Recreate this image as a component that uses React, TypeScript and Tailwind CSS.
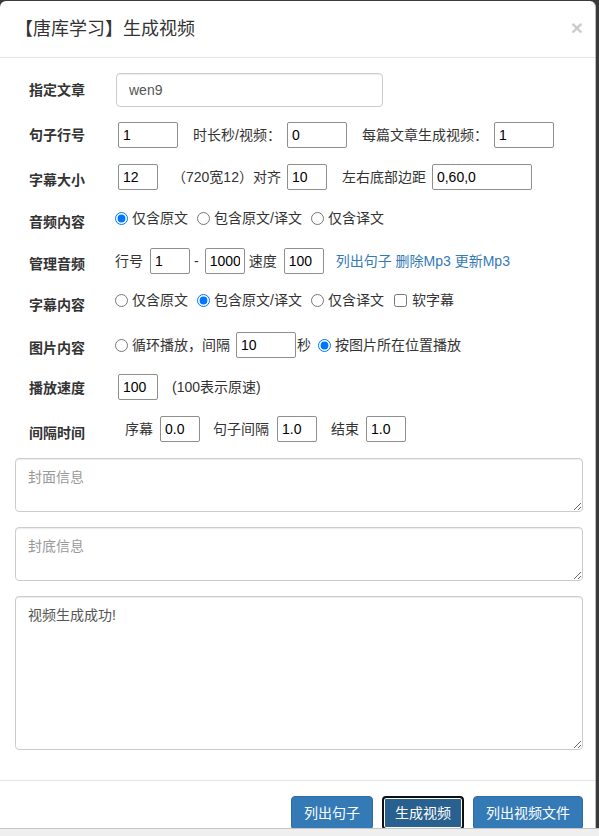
import React from "react";

const smallInput =
  "h-[26px] shrink-0 rounded-[2px] border border-[#8f8f8f] bg-white px-[4px] text-[14px] text-black outline-none";

const Label = ({ text, shift = "" }: { text: string; shift?: string }) => (
  <div className={`w-[101px] shrink-0 pl-[14px] text-[14px] font-bold text-[#333] ${shift}`}>{text}</div>
);

const Radio = ({ checked = false, className = "" }: { checked?: boolean; className?: string }) => (
  <input type="radio" defaultChecked={checked} className={`m-0 h-[13px] w-[13px] shrink-0 ${className}`} />
);

const TextArea = ({ placeholder, value, className }: { placeholder?: string; value?: string; className: string }) => (
  <textarea
    placeholder={placeholder}
    defaultValue={value}
    className={`block w-full rounded-[4px] border border-[#ccc] px-[12px] py-[8px] text-[14px] leading-[20px] text-[#555] shadow-[inset_0_1px_1px_rgba(0,0,0,0.075)] outline-none placeholder:text-[#999] ${className}`}
  />
);

export default function App() {
  return (
    <div className="flex h-[836px] w-[599px] flex-col overflow-hidden bg-[#3a3a3a] font-['Liberation_Sans','Noto_Sans_CJK_SC',sans-serif] text-[14px] text-[#333]">
      <div className="flex h-[828px] shrink-0 pt-px">
        <div className="flex w-[596px] flex-col overflow-hidden rounded-t-[6px] border-r border-[#bdbdbd] bg-white">
          {/* header */}
          <div className="flex h-[57px] shrink-0 items-center border-b border-[#e5e5e5] pl-[15px] pr-[12px]">
            <h4 className="text-[18px] leading-[26px] text-[#333]">【唐库学习】生成视频</h4>
            <span className="ml-auto mt-[-4px] text-[21px] font-bold leading-none text-black opacity-20">×</span>
          </div>

          {/* body */}
          <div className="shrink-0 pb-[30px] pl-[15px] pr-[12px] pt-[15px]">
            <div className="flex h-[34px] items-center">
              <Label text="指定文章" />
              <input
                defaultValue="wen9"
                className="h-[34px] w-[267px] rounded-[4px] border border-[#ccc] px-[12px] text-[14px] text-[#555] shadow-[inset_0_1px_1px_rgba(0,0,0,0.075)] outline-none"
              />
            </div>

            <div className="mt-[15px] flex h-[26px] items-center whitespace-nowrap">
              <Label text="句子行号" />
              <input defaultValue="1" className={`${smallInput} ml-[2px] w-[60px]`} />
              <span className="ml-[15px]">时长秒/视频：</span>
              <input defaultValue="0" className={`${smallInput} ml-[6px] w-[60px]`} />
              <span className="ml-[15px]">每篇文章生成视频：</span>
              <input defaultValue="1" className={`${smallInput} ml-[6px] w-[60px]`} />
            </div>

            <div className="mt-[16px] flex h-[26px] items-center whitespace-nowrap">
              <Label text="字幕大小" shift="mt-[6px]" />
              <input defaultValue="12" className={`${smallInput} ml-[2px] w-[40px]`} />
              <span className="ml-[14px]">（720宽12）对齐</span>
              <input defaultValue="10" className={`${smallInput} ml-[6px] w-[40px]`} />
              <span className="ml-[15px]">左右底部边距</span>
              <input defaultValue="0,60,0" className={`${smallInput} ml-[6px] w-[100px]`} />
            </div>

            <div className="mt-[18px] flex h-[20px] items-center whitespace-nowrap">
              <Label text="音频内容" shift="mt-[8px]" />
              <Radio checked className="ml-[-1px]" />
              <span className="ml-[4px]">仅含原文</span>
              <Radio className="ml-[9px]" />
              <span className="ml-[4px]">包含原文/译文</span>
              <Radio className="ml-[9px]" />
              <span className="ml-[4px]">仅含译文</span>
            </div>

            <div className="mt-[20px] flex h-[26px] items-center whitespace-nowrap">
              <Label text="管理音频" shift="mt-[6px]" />
              <span className="ml-[-1px]">行号</span>
              <input defaultValue="1" className={`${smallInput} ml-[7px] w-[40px]`} />
              <span className="ml-[4px]">-</span>
              <input defaultValue="1000" className={`${smallInput} ml-[6px] w-[40px]`} />
              <span className="ml-[4px]">速度</span>
              <input defaultValue="100" className={`${smallInput} ml-[7px] w-[40px]`} />
              <span className="ml-[12px] text-[#337ab7]">列出句子 删除Mp3 更新Mp3</span>
            </div>

            <div className="mt-[16px] flex h-[20px] items-center whitespace-nowrap">
              <Label text="字幕内容" shift="mt-[10px]" />
              <Radio className="ml-[-1px]" />
              <span className="ml-[4px]">仅含原文</span>
              <Radio checked className="ml-[9px]" />
              <span className="ml-[4px]">包含原文/译文</span>
              <Radio className="ml-[9px]" />
              <span className="ml-[4px]">仅含译文</span>
              <input type="checkbox" className="m-0 ml-[10px] h-[13px] w-[13px]" />
              <span className="ml-[5px]">软字幕</span>
            </div>

            <div className="mt-[22px] flex h-[26px] items-center whitespace-nowrap">
              <Label text="图片内容" shift="mt-[6px]" />
              <Radio className="ml-[-1px]" />
              <span className="ml-[4px]">循环播放，间隔</span>
              <input defaultValue="10" className={`${smallInput} ml-[6px] w-[60px]`} />
              <span className="ml-[1px]">秒</span>
              <Radio checked className="ml-[7px]" />
              <span className="ml-[4px]">按图片所在位置播放</span>
            </div>

            <div className="mt-[16px] flex h-[26px] items-center whitespace-nowrap">
              <Label text="播放速度" shift="mt-[2px]" />
              <input defaultValue="100" className={`${smallInput} ml-[2px] w-[40px]`} />
              <span className="ml-[14px]">(100表示原速)</span>
            </div>

            <div className="mt-[16px] flex h-[26px] items-center whitespace-nowrap">
              <Label text="间隔时间" shift="mt-[8px]" />
              <span className="ml-[9px]">序幕</span>
              <input defaultValue="0.0" className={`${smallInput} ml-[7px] w-[40px]`} />
              <span className="ml-[13px]">句子间隔</span>
              <input defaultValue="1.0" className={`${smallInput} ml-[8px] w-[40px]`} />
              <span className="ml-[14px]">结束</span>
              <input defaultValue="1.0" className={`${smallInput} ml-[7px] w-[40px]`} />
            </div>

            <TextArea placeholder="封面信息" className="mt-[16px] h-[54px]" />
            <TextArea placeholder="封底信息" className="mt-[15px] h-[54px]" />
            <TextArea value="视频生成成功!" className="mt-[15px] h-[154px]" />
          </div>

          {/* footer */}
          <div className="flex shrink-0 justify-end gap-[9px] border-t border-[#e5e5e5] px-[12px] pt-[15px]">
            <button className="h-[34px] w-[82px] rounded-[4px] border border-[#2e6da4] bg-[#337ab7] text-[14px] text-white">
              列出句子
            </button>
            <button className="h-[34px] w-[82px] rounded-[4px] border-2 border-[#101010] bg-[#286090] text-[14px] text-white shadow-[inset_0_0_0_1px_#ffffff]">
              生成视频
            </button>
            <button className="h-[34px] w-[110px] rounded-[4px] border border-[#2e6da4] bg-[#337ab7] text-[14px] text-white">
              列出视频文件
            </button>
          </div>
        </div>
      </div>
      <div className="h-[8px] shrink-0 border-t border-[#c4c4c4] bg-[#efefef]" />
    </div>
  );
}
